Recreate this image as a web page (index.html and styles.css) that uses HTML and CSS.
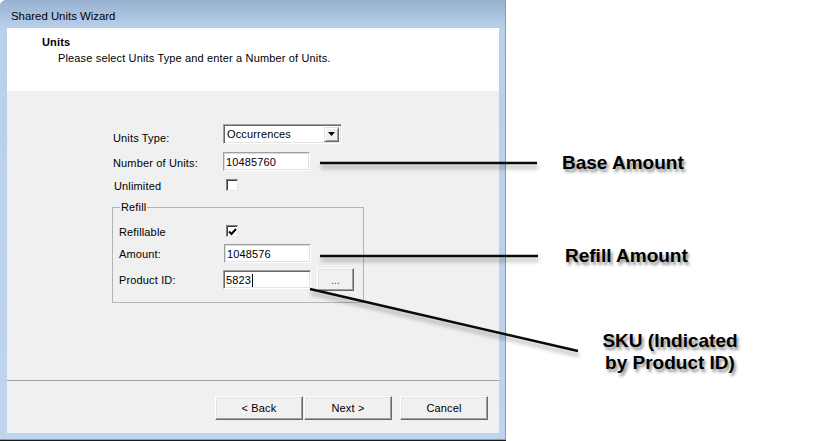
FILE: index.html
```html
<!DOCTYPE html>
<html>
<head>
<meta charset="utf-8">
<title>Shared Units Wizard</title>
<link rel="stylesheet" href="styles.css">
</head>
<body>
<div class="stage">
  <div class="window">
    <div class="titlebar">Shared Units Wizard</div>
    <div class="frame">
      <div class="panel">
        <div class="header">
          <div class="header-title">Units</div>
          <div class="header-sub">Please select Units Type and enter a Number of Units.</div>
        </div>
        <div class="body">
          <div class="form">
            <div class="row row-type">
              <div class="label">Units Type:</div>
              <div class="select">
                <span class="select-text">Occurrences</span>
                <span class="select-btn">
                  <svg width="7" height="4" viewBox="0 0 7 4"><path d="M0 0H7L3.5 4Z" fill="#000"/></svg>
                </span>
              </div>
            </div>
            <div class="row row-num">
              <div class="label">Number of Units:</div>
              <div class="input">10485760</div>
            </div>
            <div class="row row-unl">
              <div class="label label-unl">Unlimited</div>
              <div class="check"></div>
            </div>
            <fieldset class="group">
              <legend class="legend">Refill</legend>
              <div class="row row-refillable">
                <div class="label label-in">Refillable</div>
                <div class="check check-on">
                  <svg width="9" height="8" viewBox="0 0 9 8"><path d="M1 3.5L3.5 6L8 1" fill="none" stroke="#000" stroke-width="2"/></svg>
                </div>
              </div>
              <div class="row row-amount">
                <div class="label label-in">Amount:</div>
                <div class="input input-in">1048576</div>
              </div>
              <div class="row row-prod">
                <div class="label label-in">Product ID:</div>
                <div class="input input-focus">5823<span class="caret"></span></div>
                <div class="btn btn-dots">...</div>
              </div>
            </fieldset>
          </div>
          <div class="footer">
            <div class="btn btn-nav">&lt; Back</div>
            <div class="btn btn-nav">Next &gt;</div>
            <div class="btn btn-nav btn-cancel">Cancel</div>
          </div>
        </div>
      </div>
    </div>
  </div>

  <svg class="callout-lines" width="832" height="441" viewBox="0 0 832 441">
    <line x1="320" y1="163" x2="537" y2="163"/>
    <line x1="320" y1="256" x2="538" y2="256"/>
    <line x1="310" y1="289" x2="578" y2="351"/>
  </svg>
  <div class="callout callout-base">Base Amount</div>
  <div class="callout callout-refill">Refill Amount</div>
  <div class="callout callout-sku">SKU (Indicated<br>by Product ID)</div>
</div>
</body>
</html>
```

FILE: styles.css
```css
html, body {
  margin: 0;
  padding: 0;
  background: #ffffff;
}

.stage {
  position: relative;
  width: 832px;
  height: 441px;
  overflow: hidden;
  font-family: "Liberation Sans", Arial, sans-serif;
}

.window {
  width: 505px;
  height: 439px;
  border-right: 1px solid #3fb6dd;
  border-bottom: 1px solid #3fb6dd;
  box-shadow: 0 1px 0 #1b1b1b;
  border-top-left-radius: 6px;
  background: #bcd3ec;
  display: flex;
  flex-direction: column;
}

.titlebar {
  height: 28px;
  box-sizing: border-box;
  padding: 9px 0 0 11px;
  font-size: 11.4px;
  line-height: 14px;
  color: #000;
  background: linear-gradient(#97b1d0, #b9d0ea);
  border-top-left-radius: 6px;
}

.frame {
  flex: 1;
  padding: 0 6px 6px 7px;
  display: flex;
  background: linear-gradient(#b9d0ea, #bfd5ee);
}

.panel {
  flex: 1;
  display: flex;
  flex-direction: column;
  font-size: 11px;
  letter-spacing: 0.15px;
  color: #000;
}

.header {
  height: 63px;
  box-sizing: border-box;
  background: #ffffff;
  padding: 8px 0 0 35px;
}

.header-title {
  font-weight: bold;
  line-height: 13px;
  height: 13px;
}

.header-sub {
  margin: 3px 0 0 16px;
  line-height: 13px;
}

.body {
  flex: 1;
  background: #f0f0f0;
  display: flex;
  flex-direction: column;
}

.form {
  flex: 1;
  padding: 33px 0 0 106px;
}

.row {
  display: flex;
  align-items: flex-start;
}

.label {
  width: 110px;
  flex: none;
  line-height: 13px;
}

.row-type { height: 20px; }
.row-type .label { padding-top: 8px; }

.row-num { height: 19px; margin-top: 8px; }
.row-num .label { padding-top: 5px; }

.row-unl { height: 12px; margin-top: 8px; }
.label-unl { padding-top: 1px; margin-left: 1px; width: 111px; }
.row-unl .check { margin-left: 1px; }

.select {
  box-sizing: border-box;
  width: 119px;
  height: 20px;
  background: #fff;
  border: 1px solid;
  border-color: #a0a0a0 #ffffff #ffffff #a0a0a0;
  box-shadow: inset 1px 1px 0 #696969, inset -1px -1px 0 #e3e3e3;
  display: flex;
  align-items: center;
  padding: 0 2px 0 3px;
}

.select-text {
  flex: 1;
  line-height: 13px;
}

.select-btn {
  width: 15px;
  height: 15px;
  box-sizing: border-box;
  background: #f0f0f0;
  border: 1px solid;
  border-color: #e3e3e3 #696969 #696969 #e3e3e3;
  box-shadow: inset 1px 1px 0 #ffffff, inset -1px -1px 0 #a0a0a0;
  display: flex;
  align-items: center;
  justify-content: center;
}

.input {
  box-sizing: border-box;
  width: 87px;
  height: 19px;
  background: #fff;
  border: 1px solid;
  border-color: #a0a0a0 #ffffff #ffffff #a0a0a0;
  box-shadow: inset 1px 1px 0 #d8d8d8, inset -1px -1px 0 #e3e3e3;
  padding: 3px 0 0 2px;
  line-height: 13px;
  display: flex;
}

.input-focus {
  border-color: #a0a0a0 #ffffff #ffffff #a0a0a0;
  box-shadow: inset 1px 1px 0 #696969, inset -1px -1px 0 #e3e3e3;
  margin-top: 2px;
  margin-left: -1px;
  width: 88px;
}

.caret {
  display: inline-block;
  width: 1px;
  height: 13px;
  background: #000;
  margin-left: 1px;
}

.check {
  box-sizing: border-box;
  width: 12px;
  height: 12px;
  background: #fff;
  border: 1px solid;
  border-color: #808080 #e8e8e8 #e8e8e8 #808080;
  box-shadow: inset 1px 1px 0 #404040;
  display: flex;
  align-items: center;
  justify-content: center;
  padding: 1px 0 0 1px;
}

.group {
  box-sizing: border-box;
  width: 252px;
  margin: 10px 0 0 -1px;
  padding: 11px 0 11px 6px;
  border: 1px solid #b4b4b4;
  min-width: 0;
}

.legend {
  padding: 0 1px;
  margin-left: 1px;
  line-height: 13px;
}

.label-in {
  width: 105px;
}

.row-refillable { height: 12px; }
.row-refillable .label { padding-top: 1px; }
.row-refillable .check { margin-left: 2px; }

.row-amount { height: 19px; margin-top: 7px; }
.row-amount .label { padding-top: 4px; }
.input-in { margin-left: 0; }

.row-prod { height: 23px; margin-top: 5px; }
.row-prod .label { padding-top: 6px; }

.btn {
  box-sizing: border-box;
  background: #f0f0f0;
  border: 1px solid;
  border-color: #ffffff #696969 #696969 #ffffff;
  box-shadow: inset -1px -1px 0 #a0a0a0, inset 1px 1px 0 #e3e3e3;
  display: flex;
  align-items: center;
  justify-content: center;
  line-height: 13px;
}

.btn-dots {
  width: 37px;
  height: 23px;
  margin-left: 6px;
  color: #6b2580;
  font-size: 10px;
  padding-top: 1px;
}

.footer {
  height: 53px;
  box-sizing: border-box;
  border-top: 1px solid #a0a0a0;
  padding: 15px 11px 0 0;
  display: flex;
  justify-content: flex-end;
  align-items: flex-start;
  gap: 1px;
}

.btn-nav {
  width: 88px;
  height: 24px;
}

.btn-cancel {
  margin-left: 7px;
}

.callout-lines {
  position: absolute;
  left: 0;
  top: 0;
  pointer-events: none;
  filter: drop-shadow(1px 4px 2px rgba(0, 0, 0, 0.35));
}

.callout-lines line {
  stroke: #0a0a0a;
  stroke-width: 2.4;
}

.callout {
  position: absolute;
  font-family: "Liberation Sans", Arial, sans-serif;
  font-weight: bold;
  font-size: 19px;
  line-height: 22px;
  color: #000;
  text-shadow: 2px 3px 3px rgba(0, 0, 0, 0.45);
  white-space: nowrap;
}

.callout-base {
  left: 562px;
  top: 152px;
}

.callout-refill {
  left: 565px;
  top: 245px;
}

.callout-sku {
  left: 598px;
  width: 144px;
  top: 330px;
  text-align: center;
}
```
